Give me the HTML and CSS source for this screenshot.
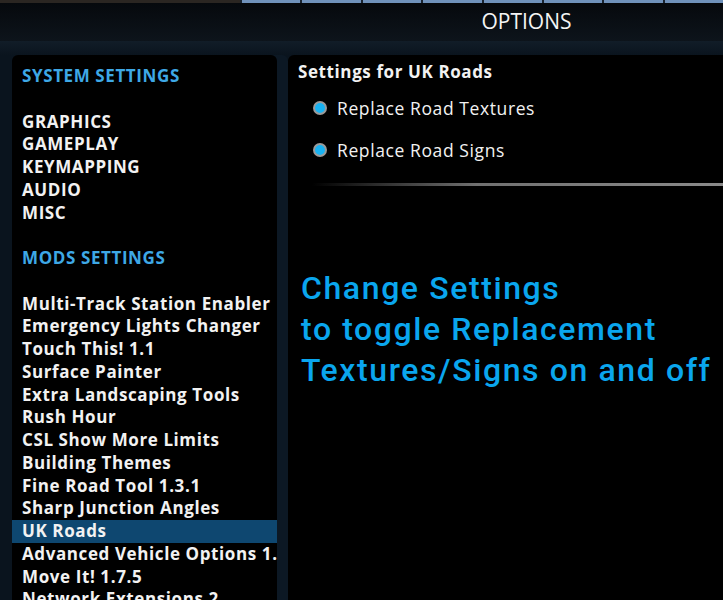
FILE: index.html
```html
<!DOCTYPE html>
<html lang="en">
<head>
    <meta charset="UTF-8">
    <meta name="viewport" content="width=device-width, initial-scale=1.0">
    <title>Options</title>
    <link rel="stylesheet" href="styles.css">
</head>
<body>
    <div class="top-strip">
        <div class="strip-dark"></div>
        <div class="strip-tile"></div>
        <div class="strip-tile"></div>
        <div class="strip-tile"></div>
        <div class="strip-tile"></div>
        <div class="strip-tile"></div>
        <div class="strip-tile"></div>
        <div class="strip-tile"></div>
        <div class="strip-tile"></div>
    </div>
    <div class="title-bar">OPTIONS</div>
    <div class="sub-bar"></div>

    <div class="options-main">
        <div class="side-panel">
            <div class="group-title">SYSTEM SETTINGS</div>
            <ul class="menu-list">
                <li class="menu-item">GRAPHICS</li>
                <li class="menu-item">GAMEPLAY</li>
                <li class="menu-item">KEYMAPPING</li>
                <li class="menu-item">AUDIO</li>
                <li class="menu-item">MISC</li>
            </ul>
            <div class="group-title">MODS SETTINGS</div>
            <ul class="menu-list">
                <li class="menu-item">Multi-Track Station Enabler</li>
                <li class="menu-item">Emergency Lights Changer</li>
                <li class="menu-item">Touch This! 1.1</li>
                <li class="menu-item">Surface Painter</li>
                <li class="menu-item">Extra Landscaping Tools</li>
                <li class="menu-item">Rush Hour</li>
                <li class="menu-item">CSL Show More Limits</li>
                <li class="menu-item">Building Themes</li>
                <li class="menu-item">Fine Road Tool 1.3.1</li>
                <li class="menu-item">Sharp Junction Angles</li>
                <li class="menu-item selected">UK Roads</li>
                <li class="menu-item">Advanced Vehicle Options 1.</li>
                <li class="menu-item">Move It! 1.7.5</li>
                <li class="menu-item">Network Extensions 2</li>
            </ul>
        </div>

        <div class="content-panel">
            <div class="settings-title">Settings for UK Roads</div>
            <label class="check-row"><span class="radio"></span>Replace Road Textures</label>
            <label class="check-row"><span class="radio"></span>Replace Road Signs</label>
            <div class="separator"></div>
            <div class="note">
                Change Settings<br>
                to toggle Replacement<br>
                Textures/Signs on and off
            </div>
        </div>
    </div>
</body>
</html>
```

FILE: styles.css
```css
html, body {
    margin: 0;
    height: 100%;
    overflow: hidden;
}

body {
    background: #0a141e;
    font-family: 'Open Sans', sans-serif;
    color: #f2f2f2;
}

.top-strip {
    display: flex;
    height: 3px;
    background: #1a2430;
    gap: 2px;
}
.strip-dark {
    width: 240px;
    background: #2b2622;
}
.strip-tile {
    flex: 1;
    background: #7092bb;
}

.title-bar {
    height: 38px;
    line-height: 36px;
    padding-left: 330px;
    text-align: center;
    font-size: 21px;
    color: #f4f4f4;
    background: linear-gradient(#06090d, #0d141b);
}

.sub-bar {
    height: 14px;
    background: linear-gradient(#111d28, #0a141e);
}

.options-main {
    display: flex;
    gap: 11px;
    padding-left: 12px;
    height: 545px;
}

.side-panel {
    width: 265px;
    background: #000;
    border-radius: 6px 6px 0 0;
    padding-top: 10px;
    font-weight: 700;
    font-size: 17px;
    letter-spacing: 0.6px;
    line-height: 22.75px;
    box-shadow: 11px 0 0 #0c1824;
}

.group-title {
    color: #3ea8e6;
    padding-left: 10px;
    margin-bottom: 22.75px;
}

.menu-list {
    list-style: none;
    margin: 0 0 22.75px;
    padding: 0;
}

.menu-item {
    padding-left: 10px;
    white-space: nowrap;
    overflow: hidden;
}

.menu-item.selected {
    background: #0e4770;
}

.content-panel {
    flex: 1;
    background: #000;
    border-radius: 6px 0 0 0;
    padding-top: 6px;
}

.settings-title {
    font-weight: 700;
    font-size: 17px;
    letter-spacing: 0.6px;
    line-height: 22px;
    padding-left: 10px;
}

.check-row {
    display: flex;
    align-items: center;
    gap: 10px;
    padding-left: 25px;
    font-size: 17.5px;
    letter-spacing: 0.6px;
    height: 42px;
}
.check-row:first-of-type {
    margin-top: 4px;
}

.radio {
    width: 10px;
    height: 10px;
    border-radius: 50%;
    background: #18b2f2;
    border: 2px solid #9a9a9a;
}

.separator {
    height: 3px;
    margin: 12px 0 0 24px;
    background: linear-gradient(to right, rgba(120, 120, 120, 0), #707070 40%, #8a8a8a);
}

.note {
    margin-top: 82px;
    padding-left: 13px;
    font-family: Roboto, sans-serif;
    font-weight: 500;
    font-size: 32px;
    line-height: 41px;
    letter-spacing: 1.6px;
    color: #0aa6ee;
    white-space: nowrap;
}
```
